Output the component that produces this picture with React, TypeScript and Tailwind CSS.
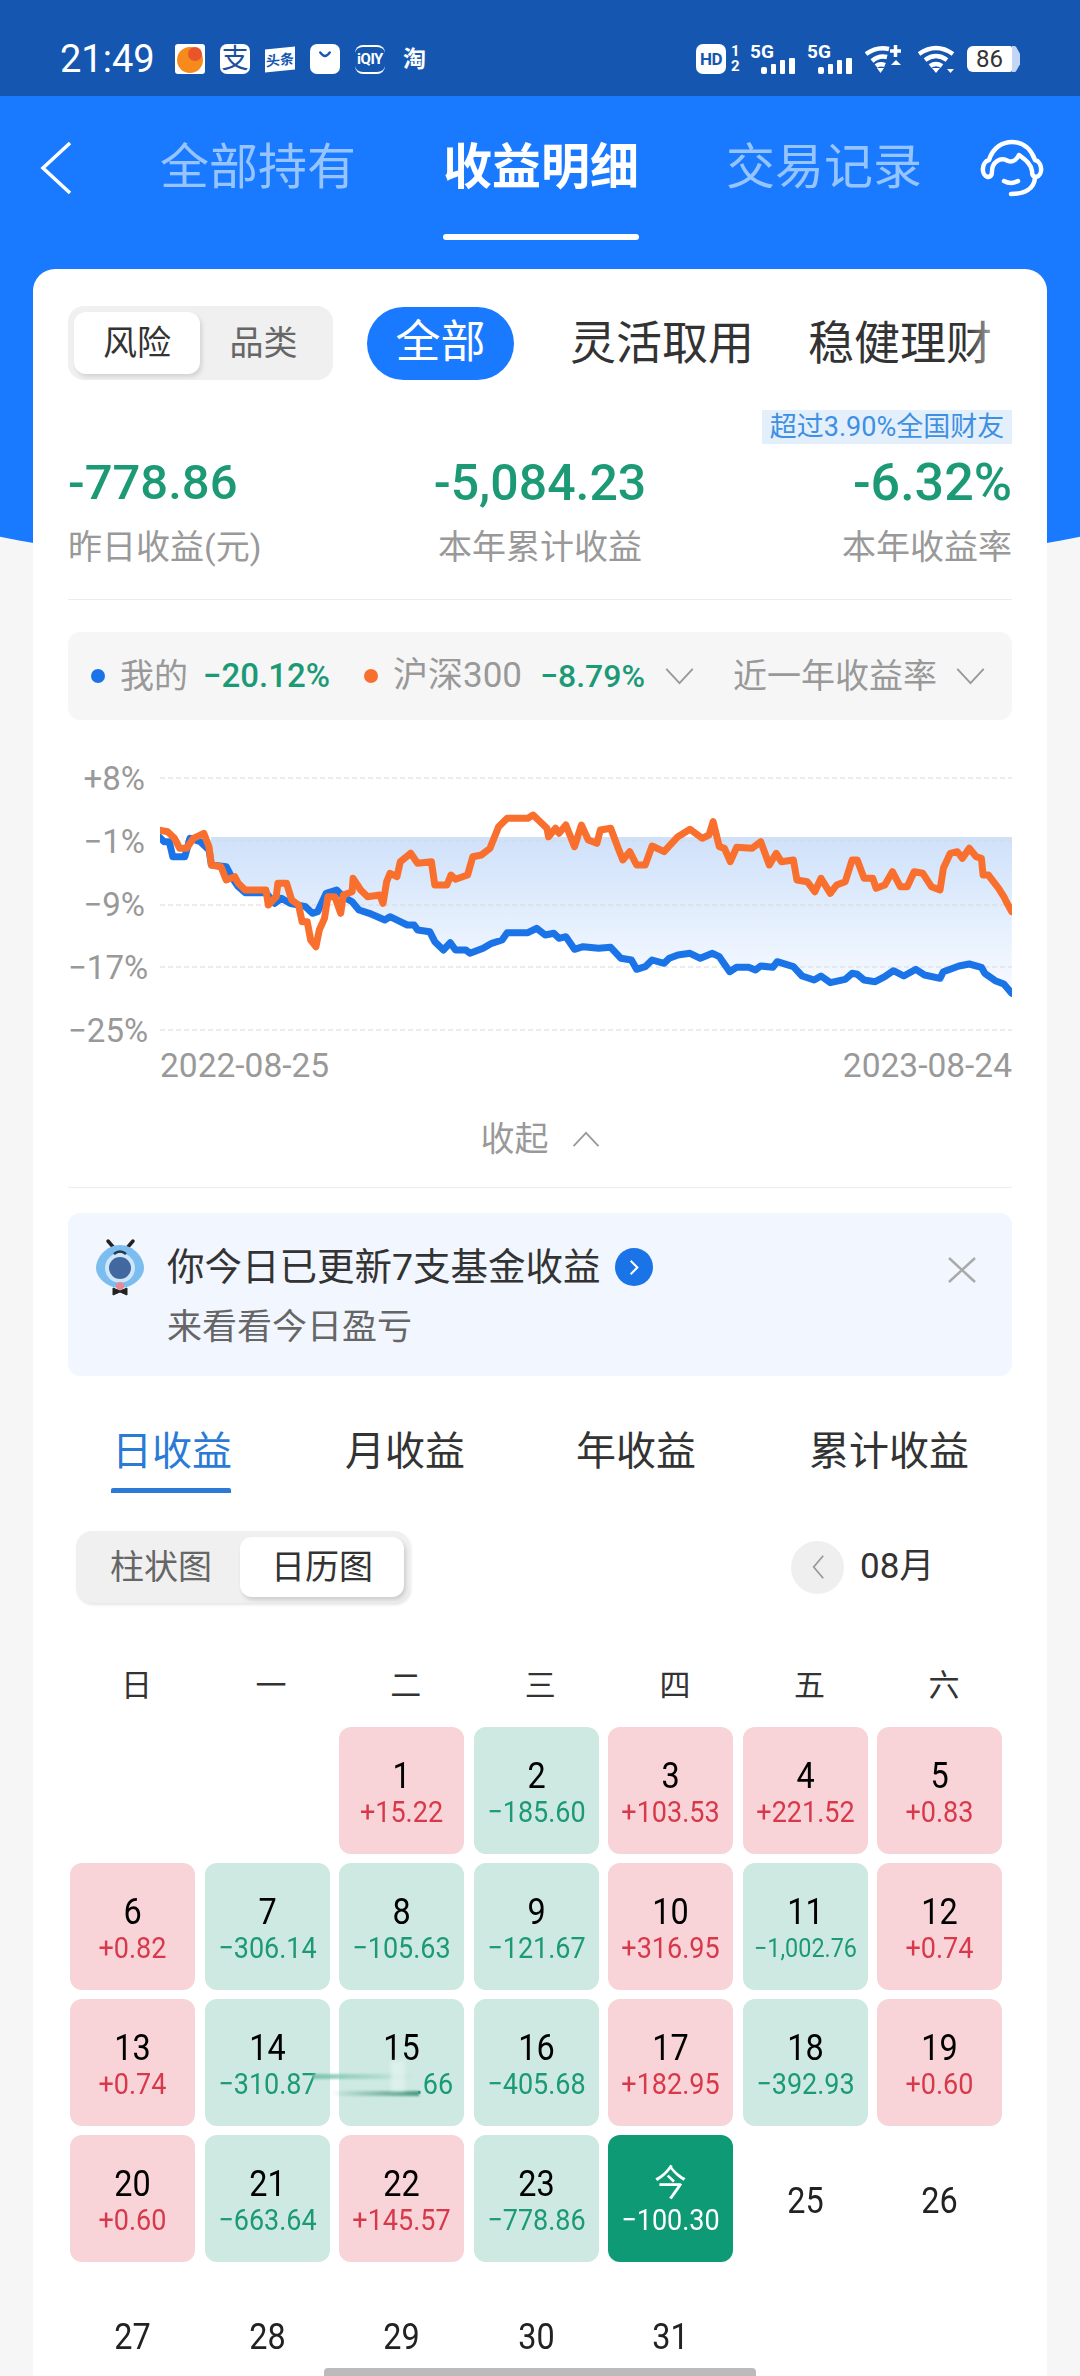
import React from 'react';

type Day = { d: number | string; v?: string; s?: 'up' | 'down' | 'today' };

const days: (Day | null)[] = [
  null, null,
  { d: 1, v: '+15.22', s: 'up' }, { d: 2, v: '−185.60', s: 'down' }, { d: 3, v: '+103.53', s: 'up' }, { d: 4, v: '+221.52', s: 'up' }, { d: 5, v: '+0.83', s: 'up' },
  { d: 6, v: '+0.82', s: 'up' }, { d: 7, v: '−306.14', s: 'down' }, { d: 8, v: '−105.63', s: 'down' }, { d: 9, v: '−121.67', s: 'down' }, { d: 10, v: '+316.95', s: 'up' }, { d: 11, v: '−1,002.76', s: 'down' }, { d: 12, v: '+0.74', s: 'up' },
  { d: 13, v: '+0.74', s: 'up' }, { d: 14, v: '−310.87', s: 'down' }, { d: 15, v: '.66', s: 'down' }, { d: 16, v: '−405.68', s: 'down' }, { d: 17, v: '+182.95', s: 'up' }, { d: 18, v: '−392.93', s: 'down' }, { d: 19, v: '+0.60', s: 'up' },
  { d: 20, v: '+0.60', s: 'up' }, { d: 21, v: '−663.64', s: 'down' }, { d: 22, v: '+145.57', s: 'up' }, { d: 23, v: '−778.86', s: 'down' }, { d: '今', v: '−100.30', s: 'today' }, { d: 25 }, { d: 26 },
  { d: 27 }, { d: 28 }, { d: 29 }, { d: 30 }, { d: 31 },
];

// traced from the reference, [x, y] in crop coordinates
const orangeA = [[345,270],[370,275],[390,295],[405,325],[425,325],[445,295],[475,280],[490,320],[497,375],[525,380],[540,420],[565,410],[575,430],[595,450],[655,450],[662,495],[685,470],[690,430],[715,430],[730,480],[750,495],[760,545],[775,545],[785,600],[800,620],[810,570],[825,535],[835,470],[855,470],[872,520],[880,465],[905,455],[908,415],[930,450],[950,470],[985,465],[995,490],[1005,425],[1015,400],[1035,410],[1045,365],[1075,340],[1095,370],[1135,365],[1145,435],[1180,435],[1192,405],[1205,418],[1240,405],[1255,350],[1280,345],[1305,325],[1330,260],[1355,235],[1415,235],[1430,225],[1445,240],[1470,265],[1475,290],[1495,265],[1505,280],[1525,255]];
const orangeB = [[100,320],[120,255],[140,300],[165,310],[175,270],[205,265],[225,320],[240,360],[260,335],[280,375],[305,375],[325,318],[360,335],[400,290],[435,268],[470,295],[490,285],[502,245],[520,320],[535,325],[552,365],[570,322],[615,325],[640,305],[665,375],[685,340],[700,365],[735,360],[745,420],[775,425],[797,455],[815,415],[842,460],[860,435],[885,425],[905,360],[920,360],[940,415],[965,415],[975,445],[1000,435],[1022,395],[1045,440],[1065,440],[1085,395],[1110,400],[1135,440],[1160,450],[1170,385],[1190,340],[1210,335],[1225,355],[1245,325],[1265,350],[1280,355],[1285,405],[1300,405],[1330,445],[1345,470],[1355,490],[1368,515]];
const blueA = [[345,290],[360,305],[375,305],[385,350],[420,350],[435,295],[465,305],[490,330],[497,375],[540,380],[555,410],[575,440],[595,458],[655,458],[680,490],[700,475],[725,490],[770,500],[790,520],[805,515],[830,460],[860,450],[880,470],[905,485],[925,510],[955,520],[1000,540],[1015,530],[1045,545],[1065,555],[1085,555],[1095,570],[1130,575],[1145,605],[1170,630],[1190,608],[1205,630],[1235,630],[1247,640],[1285,625],[1310,610],[1340,600],[1355,578],[1415,578],[1440,565],[1465,585],[1490,580],[1505,595],[1525,590]];
const blueB = [[100,628],[125,620],[170,625],[205,622],[235,655],[265,660],[280,688],[305,680],[325,660],[360,670],[375,655],[400,645],[435,640],[465,655],[500,640],[520,650],[550,695],[570,682],[605,682],[625,690],[640,678],[675,682],[688,665],[735,680],[760,708],[795,720],[815,708],[842,728],[885,718],[905,700],[920,703],[940,720],[972,725],[1000,710],[1025,692],[1055,708],[1090,688],[1115,705],[1160,715],[1170,695],[1215,678],[1245,672],[1280,682],[1290,700],[1320,722],[1345,732],[1368,760]];

const toPoints = (a: number[][], b: number[][]) => [
  ...a.map(([x, y]) => [x / 2.9 - 120, y / 3 - 7]),
  ...b.map(([x, y]) => [x / 2.9 + 380, y / 3 - 7]),
];
const str = (p: number[][]) => p.map(([x, y]) => `${x.toFixed(1)},${y.toFixed(1)}`).join(' ');

const orange = toPoints(orangeA, orangeB);
const blue = toPoints(blueA, blueB);
const fill = blue.filter(([x]) => x >= 51);

const Chevron = ({ className }: { className: string }) => (
  <svg viewBox="0 0 30 18" className={className} fill="none" stroke="currentColor" strokeWidth="2">
    <path d="M1 1 L15 16 L29 1" />
  </svg>
);

const Signal = () => (
  <div className="w-[45px] h-[29px] flex flex-col">
    <span className="h-[13px] text-[19px] leading-[14px] font-bold text-white">5G</span>
    <div className="h-[16px] flex items-end justify-end gap-[4px]">
      <span className="w-[6px] h-[7px] rounded-[2px] bg-white" />
      <span className="w-[5px] h-[10px] rounded-[1px] bg-white" />
      <span className="w-[5px] h-[14px] rounded-[1px] bg-white" />
      <span className="w-[6px] h-[16px] rounded-[1px] bg-white" />
    </div>
  </div>
);

const StatusBar = () => (
  <div className="h-[96px] pt-[22px] pl-[60px] pr-[60px] flex items-center bg-[#1557b0] text-white">
    <span className="w-[115px] text-[38px] leading-none">21:49</span>
    <div className="flex items-center">
      <svg viewBox="0 0 30 30" className="w-[30px] h-[30px]">
        <rect width="30" height="30" rx="3" fill="white" />
        <circle cx="15" cy="16" r="13" fill="#f78a1c" />
        <circle cx="20" cy="10" r="7" fill="#e8552a" />
      </svg>
      <div className="ml-[15px] w-[30px] h-[30px] rounded-[7px] bg-white flex items-center justify-center text-[27px] leading-none text-[#1d4f9e]">支</div>
      <div className="ml-[15px] w-[30px] h-[23px] bg-white flex items-center justify-center text-[14px] leading-none font-bold text-[#1557b0] -skew-y-6">头条</div>
      <div className="ml-[15px] w-[30px] h-[30px] rounded-[7px] bg-white flex justify-center">
        <svg viewBox="0 0 20 20" className="mt-[6px] w-[16px] h-[16px]" fill="none" stroke="#1557b0" strokeWidth="3" strokeLinecap="round"><path d="M4 3 Q10 12 16 3" /></svg>
      </div>
      <div className="ml-[15px] w-[30px] h-[29px] rounded-[8px] border-y-2 border-white flex items-center justify-center text-[15px] leading-none font-bold tracking-[-0.5px]">iQIY</div>
      <span className="ml-[18px] text-[23px] leading-none font-bold">淘</span>
    </div>
    <div className="ml-auto flex items-center">
      <div className="w-[30px] h-[30px] rounded-[7px] bg-white flex items-center justify-center text-[17px] leading-none font-bold text-[#1557b0] tracking-[-0.5px]">HD</div>
      <div className="ml-[5px] w-[8px] text-[15px] leading-[15px] font-bold">1<br />2</div>
      <div className="ml-[11px]"><Signal /></div>
      <div className="ml-[12px]"><Signal /></div>
      <svg viewBox="0 0 37 28" className="ml-[13px] w-[37px] h-[28px]" fill="none" stroke="white" strokeWidth="4.5">
        <path d="M1 9 Q12 1 24 4" />
        <path d="M7 16 Q14 10 22 12" />
        <path d="M11 21 Q15 18 20 20" />
        <path d="M12 23 L19 23 L15.5 28 Z" fill="white" stroke="none" />
        <path d="M25 6 L36 6 M30.5 0 L30.5 12" strokeWidth="3.5" />
        <path d="M26 20 L31 15 L36 20 Z" fill="white" stroke="none" />
      </svg>
      <svg viewBox="0 0 37 28" className="ml-[16px] w-[37px] h-[28px]" fill="none" stroke="white" strokeWidth="4.5">
        <path d="M1 9 Q18 -3 35 9" />
        <path d="M7 15 Q18 7 29 15" />
        <path d="M12 21 Q18 17 24 21" />
        <path d="M14 23 L22 23 L18 28 Z" fill="white" stroke="none" />
        <path d="M29 24 L36 24 L32.5 28 Z" fill="white" stroke="none" />
      </svg>
      <div className="ml-[12px] w-[45px] h-[26px] rounded-l-[6px] rounded-r-[2px] bg-white flex items-center justify-center text-[24px] leading-none text-[#333]">86</div>
      <span className="w-[8px] h-[26px] rounded-r-[6px] bg-[#c3d6f3] [clip-path:polygon(0_0,45%_0,100%_30%,100%_70%,45%_100%,0_100%)]" />
    </div>
  </div>
);

const Nav = () => (
  <div className="h-[173px] flex items-start pl-[40px]">
    <svg viewBox="0 0 32 52" className="mt-[46px] w-[32px] h-[52px]" fill="none" stroke="white" strokeWidth="3.5">
      <path d="M30 1 L3 26 L30 51" />
    </svg>
    <div className="ml-[88px] mt-[48px] w-[195px] text-[49px] leading-[48px] text-[#96c4ff] whitespace-nowrap">全部持有</div>
    <div className="ml-[88px] mt-[48px] w-[196px]">
      <div className="text-[49px] leading-[48px] font-bold text-white whitespace-nowrap">收益明细</div>
      <div className="mt-[42px] h-[6px] rounded-[3px] bg-white" />
    </div>
    <div className="ml-[87px] mt-[48px] w-[197px] text-[49px] leading-[48px] text-[#96c4ff] whitespace-nowrap">交易记录</div>
    <svg viewBox="0 0 100 85" className="ml-[37px] mt-[29px] w-[100px] h-[85px]" fill="none" stroke="white" strokeWidth="4.5" strokeLinecap="round" strokeLinejoin="round">
      <path d="M28 52 C21 51 21 37 29 35 C33 22 43 17 52 17 C63 17 71 24 75 35 C83 37 83 51 76 52" />
      <path d="M28 52 C31 52 32 50 32 46 C32 38 40 31 48 36 C53 38 57 34 59 30 C64 34 71 38 72 46 C72 50 73 52 76 52" />
      <path d="M44 56 Q51 60 58 56" />
      <path d="M75 53 C74 63 66 69 51 69" />
    </svg>
  </div>
);

const Chart = () => (
  <div className="mt-[27px] h-[300px] flex items-start">
    <div className="w-[92px] pr-[15px] text-right text-[33px] text-[#999]">
      {['+8%', '−1%', '−9%', '−17%', '−25%'].map((l) => (
        <div key={l} className="h-[63px] leading-[63px]">{l}</div>
      ))}
    </div>
    <svg viewBox="0 0 852 300" className="w-[852px] h-[300px]" fill="none">
      <defs>
        <linearGradient id="area" gradientUnits="userSpaceOnUse" x1="0" y1="90" x2="0" y2="230">
          <stop offset="0" stopColor="#cfe1fa" />
          <stop offset="1" stopColor="#f3f8ff" />
        </linearGradient>
      </defs>
      <polygon points={`${str(fill)} 852,90 51,90`} fill="url(#area)" />
      {[31, 94, 158, 220, 283].map((y) => (
        <line key={y} x1="0" x2="852" y1={y} y2={y} stroke="#d9d9d9" strokeWidth="1" strokeDasharray="5 3" />
      ))}
      <polyline points={str(blue)} stroke="#1a74e8" strokeWidth="7" strokeLinejoin="round" strokeLinecap="round" />
      <polyline points={str(orange)} stroke="#f9702e" strokeWidth="7" strokeLinejoin="round" strokeLinecap="round" />
    </svg>
  </div>
);

const Mascot = () => (
  <svg viewBox="0 0 80 75" className="absolute left-[16px] top-[17px] w-[80px] h-[75px]">
    <path d="M24 11 L30 18 M49 11 L43 18" stroke="#222" strokeWidth="3.5" strokeLinecap="round" fill="none" />
    <path d="M36 15 C50 15 60 28 60 38 C60 48 48 58 36 58 C24 58 12 48 12 38 C12 28 22 15 36 15 Z" fill="#7cbdf0" />
    <circle cx="36" cy="38" r="15" fill="#cfe6fa" />
    <circle cx="36" cy="38" r="11" fill="#41689f" />
    <path d="M30 24 Q36 19 42 24" stroke="#2a3550" strokeWidth="2.5" fill="none" />
    <circle cx="36" cy="56" r="4" fill="#e58a96" />
    <path d="M29 58 L36 61 L43 58 L43 65 L36 62 L29 65 Z" fill="#222" stroke="#222" strokeWidth="1" />
  </svg>
);

const Cell = ({ day }: { day: Day | null }) => {
  if (!day) return <div />;
  if (!day.s) {
    return <div className="h-[127px] flex items-center justify-center pt-[5px] text-[36px] text-[#222] scale-x-90">{day.d}</div>;
  }
  const box = day.s === 'up' ? 'bg-[#f8d3d7]' : day.s === 'down' ? 'bg-[#cde9e1]' : 'bg-[#0f9a76]';
  const val = day.s === 'up' ? 'text-[#d8394a]' : day.s === 'down' ? 'text-[#1c9a76]' : 'text-white';
  const size = day.d === 11 ? 'text-[26px]' : 'text-[30px]';
  return (
    <div className={`relative h-[127px] rounded-[12px] pt-[31px] text-center ${box}`}>
      <div className={`h-[36px] text-[36px] leading-[36px] scale-x-90 ${day.s === 'today' ? 'text-white' : 'text-black'}`}>{day.d}</div>
      <div className={`mt-[3px] h-[30px] leading-[30px] whitespace-nowrap scale-x-90 ${size} ${val} ${day.d === 15 ? 'text-right pr-[12px] origin-right' : ''}`}>{day.v}</div>
      {day.d === 15 && (
        <>
          <span className="absolute left-[-26px] top-[75px] w-[100px] h-[5px] blur-[1px] bg-linear-to-r from-[#7cc4ae] to-transparent" />
          <span className="absolute left-[-8px] top-[92px] w-[88px] h-[5px] blur-[1px] bg-linear-to-l from-[#4f9a84] to-transparent" />
          <span className="absolute left-[52px] top-[62px] w-[14px] h-[30px] blur-[2px] bg-[#e4f4ef] opacity-70" />
        </>
      )}
    </div>
  );
};

export default function App() {
  return (
    <div className="relative h-[2376px] overflow-hidden bg-[#f6f6f6] font-['Roboto','Noto_Sans_CJK_SC',sans-serif]">
      <div className="absolute left-[-400px] top-0 w-[1880px] h-[584px] bg-[#1a7aff] [border-radius:0_0_940px_940px/0_0_260px_260px]" />
      <div className="relative">
        <StatusBar />
        <Nav />

        <div className="mx-[33px] px-[35px] pt-[37px] rounded-t-[22px] bg-white">
          {/* filter row */}
          <div className="flex items-center h-[74px]">
            <div className="w-[265px] h-[74px] p-[6px] rounded-[16px] bg-[#f0f0f0] flex items-center text-[34px]">
              <div className="w-[126px] h-[62px] rounded-[12px] bg-white shadow-[2px_3px_4px_rgba(0,0,0,0.12)] flex items-center justify-center text-[#333]">风险</div>
              <div className="flex-1 text-center text-[#666]">品类</div>
            </div>
            <div className="ml-[34px] w-[147px] h-[73px] rounded-full bg-[#1a7aff] flex items-center justify-center text-[45px] text-white">全部</div>
            <div className="relative ml-[56px] flex-1 flex items-center text-[46px] text-[#333] whitespace-nowrap overflow-hidden">
              <span>灵活取用</span>
              <span className="ml-[54px]">稳健理财</span>
              <span className="absolute right-0 top-0 w-[45px] h-full bg-linear-to-r from-transparent to-white" />
            </div>
          </div>

          <div className="mt-[30px] flex justify-end">
            <div className="w-[250px] h-[34px] bg-[#e3effb] flex items-center justify-center text-[27px] leading-none text-[#3f8fe3] whitespace-nowrap">超过3.90%全国财友</div>
          </div>

          {/* stats */}
          <div className="grid grid-cols-3 mt-[9px]">
            <div className="text-left">
              <div className="h-[60px] text-[49px] leading-[60px] font-medium text-[#1c9a76]">-778.86</div>
              <div className="mt-[14px] h-[40px] text-[34px] leading-[40px] text-[#999]">昨日收益(元)</div>
            </div>
            <div className="text-center">
              <div className="h-[60px] text-[50px] leading-[60px] font-medium text-[#1c9a76]">-5,084.23</div>
              <div className="mt-[14px] h-[40px] text-[34px] leading-[40px] text-[#999]">本年累计收益</div>
            </div>
            <div className="text-right">
              <div className="h-[60px] text-[52px] leading-[60px] font-medium text-[#1c9a76]">-6.32%</div>
              <div className="mt-[14px] h-[40px] text-[34px] leading-[40px] text-[#999]">本年收益率</div>
            </div>
          </div>

          <div className="mt-[32px] h-px bg-[#ececec]" />

          {/* legend */}
          <div className="mt-[32px] h-[88px] pl-[23px] rounded-[12px] bg-[#f6f6f6] flex items-center whitespace-nowrap">
            <span className="w-[14px] h-[14px] rounded-full bg-[#1a74e8]" />
            <span className="ml-[15px] w-[68px] text-[34px] text-[#999]">我的</span>
            <span className="ml-[15px] w-[126px] text-[33px] font-medium text-[#1c9a76]">−20.12%</span>
            <span className="ml-[35px] w-[14px] h-[14px] rounded-full bg-[#f9702e]" />
            <span className="ml-[15px] w-[128px] text-[35px] text-[#999]">沪深300</span>
            <span className="ml-[19px] w-[107px] text-[32px] font-medium text-[#1c9a76]">−8.79%</span>
            <Chevron className="ml-[18px] w-[29px] h-[17px] text-[#999]" />
            <span className="ml-[39px] w-[206px] text-[34px] text-[#999]">近一年收益率</span>
            <Chevron className="ml-[17px] w-[29px] h-[17px] text-[#999]" />
          </div>

          <Chart />

          <div className="h-[38px] flex justify-between pl-[92px] text-[33.5px] leading-[38px] text-[#999]">
            <span>2022-08-25</span>
            <span>2023-08-24</span>
          </div>

          <div className="mt-[34px] h-[40px] flex items-center justify-center text-[34px] text-[#999]">
            <span>收起</span>
            <Chevron className="ml-[23px] w-[28px] h-[16px] rotate-180" />
          </div>

          <div className="mt-[28px] h-px bg-[#ececec]" />

          {/* notice */}
          <div className="relative mt-[25px] h-[163px] pl-[99px] pt-[32px] rounded-[12px] bg-[#f2f6ff]">
            <Mascot />
            <div className="flex items-center h-[44px]">
              <span className="text-[37.5px] leading-[44px] text-[#333] whitespace-nowrap">你今日已更新7支基金收益</span>
              <span className="ml-[14px] w-[38px] h-[38px] rounded-full bg-[#1a74e8] flex items-center justify-center">
                <svg viewBox="0 0 12 20" className="w-[10px] h-[17px]" fill="none" stroke="white" strokeWidth="2.5"><path d="M2 2 L10 10 L2 18" /></svg>
              </span>
            </div>
            <div className="mt-[17px] text-[35px] leading-[44px] text-[#666]">来看看今日盈亏</div>
            <svg viewBox="0 0 30 26" className="absolute left-[879px] top-[44px] w-[30px] h-[26px]" fill="none" stroke="#aaa" strokeWidth="2.5">
              <path d="M2 1 L28 25 M28 1 L2 25" />
            </svg>
          </div>

          {/* period tabs */}
          <div className="mt-[52px] flex items-start text-[40px] leading-[48px] text-[#333] whitespace-nowrap">
            <div className="ml-[43px] w-[120px] text-[#2a7ad6]">
              <div className="pl-[1px]">日收益</div>
              <div className="mt-[12px] h-[5px] rounded-t-[2px] bg-[#2a7ad6]" />
            </div>
            <div className="ml-[114px]">月收益</div>
            <div className="ml-[111px]">年收益</div>
            <div className="ml-[113px]">累计收益</div>
          </div>

          <div className="mt-[38px] flex items-center">
            <div className="ml-[8px] w-[334px] h-[72px] p-[6px] rounded-[16px] bg-[#f0f0f0] shadow-[1px_2px_3px_rgba(0,0,0,0.1)] flex items-center text-[34px]">
              <div className="w-[158px] text-center text-[#666]">柱状图</div>
              <div className="w-[164px] h-[60px] rounded-[12px] bg-white shadow-[2px_3px_4px_rgba(0,0,0,0.15)] flex items-center justify-center text-[#333]">日历图</div>
            </div>
            <div className="ml-[381px] w-[53px] h-[53px] rounded-full bg-[#efefef] flex items-center justify-center">
              <svg viewBox="0 0 16 30" className="w-[14px] h-[26px]" fill="none" stroke="#999" strokeWidth="2"><path d="M14 2 L3 15 L14 28" /></svg>
            </div>
            <span className="ml-[16px] text-[35px] text-[#333]">08月</span>
          </div>

          {/* calendar */}
          <div className="mt-[63px] ml-[6px] grid grid-cols-[repeat(7,125px)] gap-x-[9.6px] h-[40px] text-[31px] leading-[40px] text-center text-[#333]">
            {['日', '一', '二', '三', '四', '五', '六'].map((w) => (
              <div key={w}>{w}</div>
            ))}
          </div>
          <div className="mt-[21px] ml-[2px] grid grid-cols-[repeat(7,125px)] gap-x-[9.5px] gap-y-[9px]">
            {days.map((day, i) => (
              <Cell key={i} day={day} />
            ))}
          </div>
        </div>
      </div>
      <div className="absolute left-[324px] bottom-0 w-[432px] h-[8px] rounded-t-[4px] bg-[#bbbbbb]" />
    </div>
  );
}
